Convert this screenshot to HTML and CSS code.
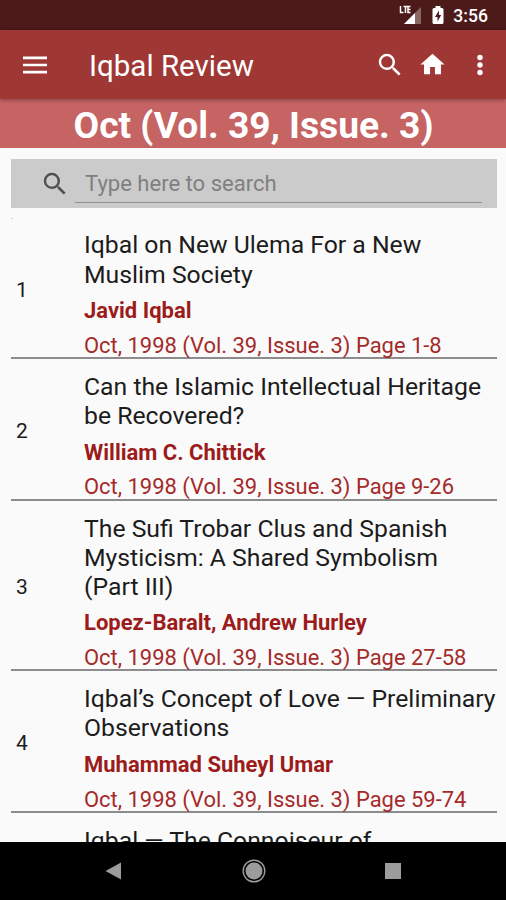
FILE: index.html
```html
<!DOCTYPE html>
<html lang="en">
<head>
  <meta charset="UTF-8" />
  <meta name="viewport" content="width=device-width, initial-scale=1" />
  <title>Iqbal Review</title>
  <link rel="stylesheet" href="styles.css">
</head>
<body>

  <!-- Status bar -->
  <div class="status-bar">
    <svg class="signal" width="23" height="20" viewBox="0 0 23 20">
      <path d="M22 2v17H5z" fill="#8a6665" />
      <path d="M16 8v11H5z" fill="#fff" />
      <path d="M1.500 1v6.500h3M4.500 1.500h4M6.500 1.500v6.500M11.500 1.500h-2.500v6h2.500M9 4.500h2.500" fill="none" stroke="#fff" stroke-width="1.500" />
    </svg>
    <svg class="battery" width="12" height="20" viewBox="0 0 12 20">
      <path d="M3.500 1h5v2H10q1.500 0 1.500 1.500v13q0 1.500-1.500 1.500H2Q.5 19 .5 17.500v-13Q.5 3 2 3h1.500z" fill="#fff" />
      <path d="M7 5.500L3 12h2.500v4.500L9.200 10H7z" fill="#4d1a1a" />
    </svg>
    <span class="clock">3:56</span>
  </div>

  <!-- App bar -->
  <header class="app-bar">
    <svg class="menu" width="24" height="18" viewBox="0 0 24 18">
      <path d="M0 1.800h24M0 9h24M0 16.200h24" stroke="#fff" stroke-width="2.700" />
    </svg>
    <h1>Iqbal Review</h1>
    <svg class="icon-search" width="30" height="30" viewBox="0 0 24 24">
      <path d="M15.500 14h-.79l-.28-.27A6.470 6.470 0 0 0 16 9.500 6.500 6.500 0 1 0 9.500 16c1.610 0 3.090-.59 4.230-1.570l.27.280v.79l5 4.990L20.490 19l-4.990-5zm-6 0C7.010 14 5 11.990 5 9.500S7.010 5 9.500 5 14 7.010 14 9.500 11.990 14 9.500 14z" fill="#fff" />
    </svg>
    <svg class="icon-home" width="29" height="29" viewBox="0 0 24 24">
      <path d="M10 20v-6h4v6h5v-8h3L12 3 2 12h3v8z" fill="#fff" />
    </svg>
    <svg class="icon-more" width="8" height="24" viewBox="0 0 8 24">
      <circle cx="4" cy="4.500" r="2.700" fill="#fff" />
      <circle cx="4" cy="12" r="2.700" fill="#fff" />
      <circle cx="4" cy="19.500" r="2.700" fill="#fff" />
    </svg>
  </header>

  <h2 class="issue">Oct (Vol. 39, Issue. 3)</h2>

  <!-- Search -->
  <div class="search">
    <svg width="30" height="30" viewBox="0 0 24 24">
      <path d="M15.500 14h-.79l-.28-.27A6.470 6.470 0 0 0 16 9.500 6.500 6.500 0 1 0 9.500 16c1.610 0 3.090-.59 4.230-1.570l.27.280v.79l5 4.990L20.490 19l-4.990-5zm-6 0C7.010 14 5 11.990 5 9.500S7.010 5 9.500 5 14 7.010 14 9.500 11.990 14 9.500 14z" fill="#505050" />
    </svg>
    <div class="search-field">Type here to search</div>
  </div>

  <!-- Article list -->
  <main class="list">
    <article class="row">
      <span class="num">1</span>
      <div class="info">
        <h3>Iqbal on New Ulema For a New<br>Muslim Society</h3>
        <p class="author">Javid Iqbal</p>
        <p class="ref">Oct, 1998 (Vol. 39, Issue. 3) Page 1-8</p>
      </div>
    </article>
    <article class="row">
      <span class="num">2</span>
      <div class="info">
        <h3>Can the Islamic Intellectual Heritage<br>be Recovered?</h3>
        <p class="author">William C. Chittick</p>
        <p class="ref">Oct, 1998 (Vol. 39, Issue. 3) Page 9-26</p>
      </div>
    </article>
    <article class="row">
      <span class="num">3</span>
      <div class="info">
        <h3>The Sufi Trobar Clus and Spanish<br>Mysticism: A Shared Symbolism<br>(Part III)</h3>
        <p class="author">Lopez-Baralt, Andrew Hurley</p>
        <p class="ref">Oct, 1998 (Vol. 39, Issue. 3) Page 27-58</p>
      </div>
    </article>
    <article class="row">
      <span class="num">4</span>
      <div class="info">
        <h3>Iqbal’s Concept of Love — Preliminary<br>Observations</h3>
        <p class="author">Muhammad Suheyl Umar</p>
        <p class="ref">Oct, 1998 (Vol. 39, Issue. 3) Page 59-74</p>
      </div>
    </article>
    <article class="row">
      <div class="info">
        <h3>Iqbal — The Connoiseur of</h3>
      </div>
    </article>
  </main>

  <!-- Navigation bar -->
  <nav class="nav-bar">
    <svg width="18" height="20" viewBox="0 0 18 20">
      <path d="M.5 10L16 1.500v17z" fill="#9c9c9c" />
    </svg>
    <svg width="24" height="24" viewBox="0 0 24 24">
      <circle cx="12" cy="12" r="10.800" fill="none" stroke="#9c9c9c" stroke-width="1.400" />
      <circle cx="12" cy="12" r="8.500" fill="#9c9c9c" />
    </svg>
    <svg width="18" height="18" viewBox="0 0 18 18">
      <rect x="1" y="1" width="16" height="16" fill="#9c9c9c" />
    </svg>
  </nav>

</body>
</html>
```
FILE: styles.css
```css
* {
  margin: 0;
  padding: 0;
  box-sizing: border-box;
}

body {
  display: flex;
  flex-direction: column;
  height: 900px;
  overflow: hidden;
  background: #fafafa;
  font-family: Roboto, sans-serif;
  color: #1c1c1c;
}

svg {
  flex: none;
  display: block;
}

/* Status bar */
.status-bar {
  flex: none;
  display: flex;
  align-items: center;
  justify-content: flex-end;
  height: 30px;
  padding-right: 18px;
  background: #4d1a1a;
}

.battery {
  margin: 0 9px 0 10px;
}

.clock {
  font-size: 17.600px;
  font-weight: 500;
  line-height: 20px;
  padding-top: 2px;
  color: #fff;
}

/* App bar */
.app-bar {
  flex: none;
  display: flex;
  align-items: center;
  height: 69px;
  padding: 0 22px 0 23px;
  background: #9f3735;
  color: #fff;
  box-shadow: 0 1px 4px rgba(0, 0, 0, 0.35);
  z-index: 1;
}

.app-bar h1 {
  flex: 1;
  margin-left: 42px;
  font-size: 29.500px;
  font-weight: 400;
  line-height: 34px;
  padding-top: 2px;
}

.icon-home {
  margin: 0 29px 0 13px;
}

.issue {
  flex: none;
  height: 49px;
  padding-left: 1px;
  background: #c66463;
  color: #fff;
  font-size: 37.200px;
  font-weight: 700;
  line-height: 52px;
  text-align: center;
}

/* Search */
.search {
  flex: none;
  display: flex;
  align-items: center;
  height: 49px;
  margin: 11px 9px 0 11px;
  padding: 0 15px 0 29px;
  background: #cbcbcb;
}

.search-field {
  flex: 1;
  height: 38px;
  margin: 0 0 -1px 5px;
  padding-left: 10px;
  border-bottom: 1px solid #8f8f8f;
  font-size: 22.050px;
  line-height: 37px;
  color: #808080;
}

/* Article list */
.list {
  flex: 1;
  min-height: 0;
  margin: 9.400px 9px 0 11px;
  overflow: hidden;
}

/* tail end of the divider above the first article */
.list::before {
  content: '';
  display: block;
  width: 2px;
  height: 1px;
  margin-top: 1px;
  margin-bottom: -2px;
  background: #d0d0d0;
}

.row {
  display: flex;
  align-items: center;
  border-bottom: 2px solid #8c8c8c;
}

.num {
  width: 73px;
  padding: 5px 0 0 5px;
  font-size: 21px;
}

.row:last-child {
  padding-left: 73px;
}

.info {
  padding-top: 13.100px;
  white-space: nowrap;
}

.info h3 {
  font-size: 24.750px;
  font-weight: 400;
  line-height: 29.100px;
}

.author {
  margin-top: 9.400px;
  font-size: 22px;
  font-weight: 700;
  line-height: 26.400px;
  color: #9c1b1b;
}

.ref {
  height: 24.200px;
  margin-top: 8.300px;
  font-size: 21.950px;
  line-height: 26.400px;
  color: #a52a2a;
}

/* Navigation bar */
.nav-bar {
  flex: none;
  display: flex;
  align-items: center;
  justify-content: space-between;
  height: 58px;
  padding: 0 104px 0 105px;
  background: #000;
}
```
